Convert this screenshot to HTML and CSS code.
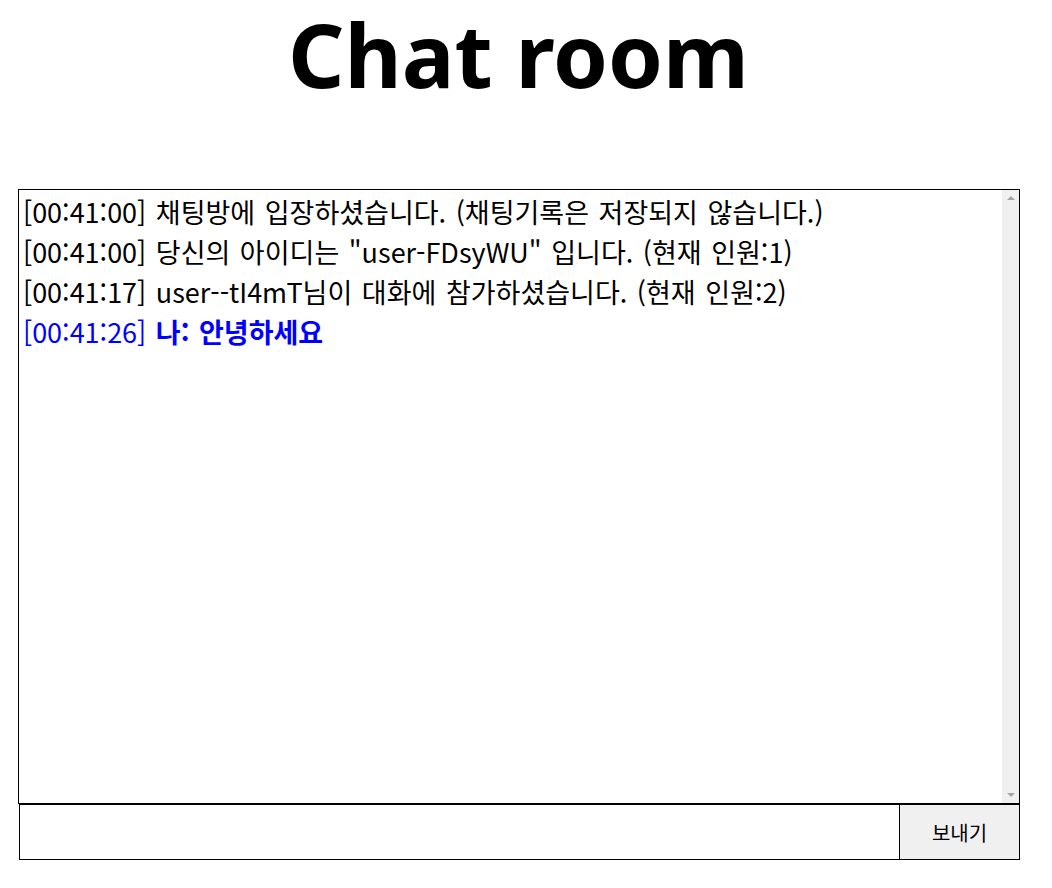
FILE: index.html
```html
<!DOCTYPE html>
<html lang="ko">
<head>
    <meta charset="UTF-8">
    <meta name="viewport" content="width=device-width, initial-scale=1.0">
    <title>Chat room</title>
    <link rel="stylesheet" href="styles.css">
</head>
<body>
    <h1 class="title">Chat room</h1>

    <div class="chat">
        <div class="log">
            <div id="messages" class="messages">
                <div class="msg">[00:41:00] 채팅방에 입장하셨습니다. (채팅기록은 저장되지 않습니다.)</div>
                <div class="msg">[00:41:00] 당신의 아이디는 "user-FDsyWU" 입니다. (현재 인원:1)</div>
                <div class="msg">[00:41:17] user--tI4mT님이 대화에 참가하셨습니다. (현재 인원:2)</div>
                <div class="msg mine">[00:41:26] <b>나: 안녕하세요</b></div>
            </div>
            <div class="scrollbar">
                <span class="arrow up"></span>
                <span class="arrow down"></span>
            </div>
        </div>

        <form class="send" onsubmit="return false;">
            <input type="text" id="text" class="send-input" autofocus>
            <button type="submit" class="send-btn">보내기</button>
        </form>
    </div>
</body>
</html>
```

FILE: styles.css
```css
body {
    margin: 0;
    padding: 0 33px 0 18px;
    font-family: "Noto Sans CJK KR", sans-serif;
    background: white;
    color: black;
}
.title {
    margin: 1px 0 82px;
    font-family: "Noto Sans", "Noto Sans CJK KR", sans-serif;
    font-size: 88px;
    line-height: 106px;
    font-weight: bold;
    text-align: center;
}
.chat {
    width: 1002px;
}
.log {
    display: flex;
    height: 613px;
    border: 1px solid black;
}
.messages {
    flex: 1;
    padding: 2px 4px;
    overflow: hidden;
    font-size: 27px;
    line-height: 40px;
    word-spacing: 2px;
}
.msg {
    white-space: nowrap;
}
.mine {
    color: #0000ff;
}
.scrollbar {
    display: flex;
    flex-direction: column;
    justify-content: space-between;
    align-items: center;
    width: 17px;
    padding: 6px 0;
    box-sizing: border-box;
    background: #f0f0f0;
}
.arrow {
    width: 0;
    height: 0;
    border-left: 4px solid transparent;
    border-right: 4px solid transparent;
}
.arrow.up {
    border-bottom: 4px solid #a3a3a3;
}
.arrow.down {
    border-top: 4px solid #a3a3a3;
}
.send {
    display: flex;
    margin: 0 0 0 1px;
    height: 56px;
}
.send-input {
    flex: 1;
    min-width: 0;
    margin: 0;
    padding: 0 7px;
    border: 1px solid black;
    border-right: none;
    font-family: inherit;
    font-size: 24px;
    outline: none;
}
.send-btn {
    width: 121px;
    margin: 0;
    padding: 0;
    border: 1px solid black;
    background: #f0f0f0;
    font-family: "Noto Sans CJK KR", sans-serif;
    font-size: 20px;
    color: black;
    cursor: pointer;
}
```
